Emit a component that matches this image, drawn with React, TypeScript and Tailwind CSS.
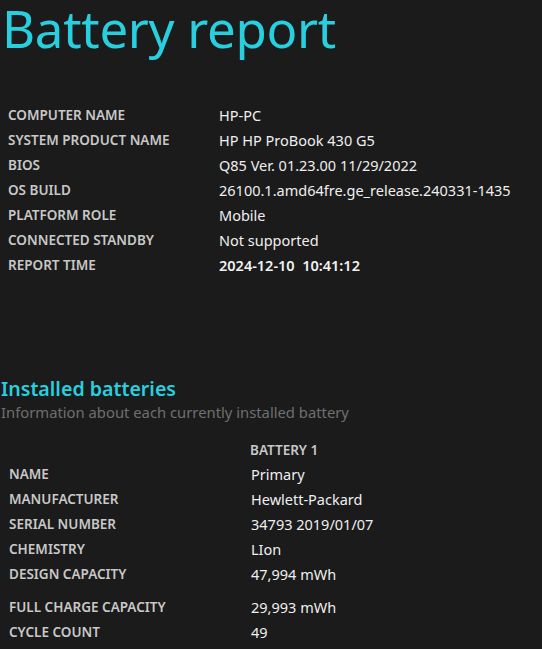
const systemRows: [string, string, boolean?][] = [
  ["COMPUTER NAME", "HP-PC"],
  ["SYSTEM PRODUCT NAME", "HP HP ProBook 430 G5"],
  ["BIOS", "Q85 Ver. 01.23.00 11/29/2022"],
  ["OS BUILD", "26100.1.amd64fre.ge_release.240331-1435"],
  ["PLATFORM ROLE", "Mobile"],
  ["CONNECTED STANDBY", "Not supported"],
  ["REPORT TIME", "2024-12-10  10:41:12", true],
];

const batteryRows: [string, string][] = [
  ["NAME", "Primary"],
  ["MANUFACTURER", "Hewlett-Packard"],
  ["SERIAL NUMBER", "34793 2019/01/07"],
  ["CHEMISTRY", "LIon"],
  ["DESIGN CAPACITY", "47,994 mWh"],
];

const capacityRows: [string, string][] = [
  ["FULL CHARGE CAPACITY", "29,993 mWh"],
  ["CYCLE COUNT", "49"],
];

export default function App() {
  return (
    <div className="min-h-[649px] w-[542px] overflow-hidden bg-[#1b1b1b] font-['Noto_Sans',sans-serif] text-[#efefef]">
      <h1 className="pl-[2px] text-[51px] leading-[56px] tracking-[-0.3px] text-[#28d0df]">
        Battery report
      </h1>

      <div className="mt-[47px] pl-[8px]">
        {systemRows.map(([label, value, bold]) => (
          <div key={label} className="flex h-[25px] items-center">
            <div className="w-[211px] text-[13.5px] font-semibold text-[#c8c8c8]">{label}</div>
            <div
              className={
                bold
                  ? "whitespace-pre text-[14.5px] font-semibold text-[#f2f2f2]"
                  : "whitespace-pre text-[14.5px] text-[#efefef]"
              }
            >
              {value}
            </div>
          </div>
        ))}
      </div>

      <div className="mt-[98px] pl-[1px]">
        <h2 className="text-[19.6px] font-semibold leading-[26px] text-[#28d0df]">Installed batteries</h2>
        <div className="text-[14.8px] leading-[20px] text-[#6f6f6f]">
          Information about each currently installed battery
        </div>
      </div>

      <div className="mt-[16px] pl-[9px]">
        <div className="flex h-[24px] items-center">
          <div className="w-[241px]" />
          <div className="text-[13.5px] font-semibold text-[#c8c8c8]">BATTERY 1</div>
        </div>
        {batteryRows.map(([label, value]) => (
          <div key={label} className="flex h-[25px] items-center">
            <div className="w-[242px] text-[13.5px] font-semibold text-[#c8c8c8]">{label}</div>
            <div className="text-[14.5px] text-[#efefef]">{value}</div>
          </div>
        ))}
        <div className="mt-[8px]">
          {capacityRows.map(([label, value]) => (
            <div key={label} className="flex h-[25px] items-center">
              <div className="w-[242px] text-[13.5px] font-semibold text-[#c8c8c8]">{label}</div>
              <div className="text-[14.5px] text-[#efefef]">{value}</div>
            </div>
          ))}
        </div>
      </div>
    </div>
  );
}
